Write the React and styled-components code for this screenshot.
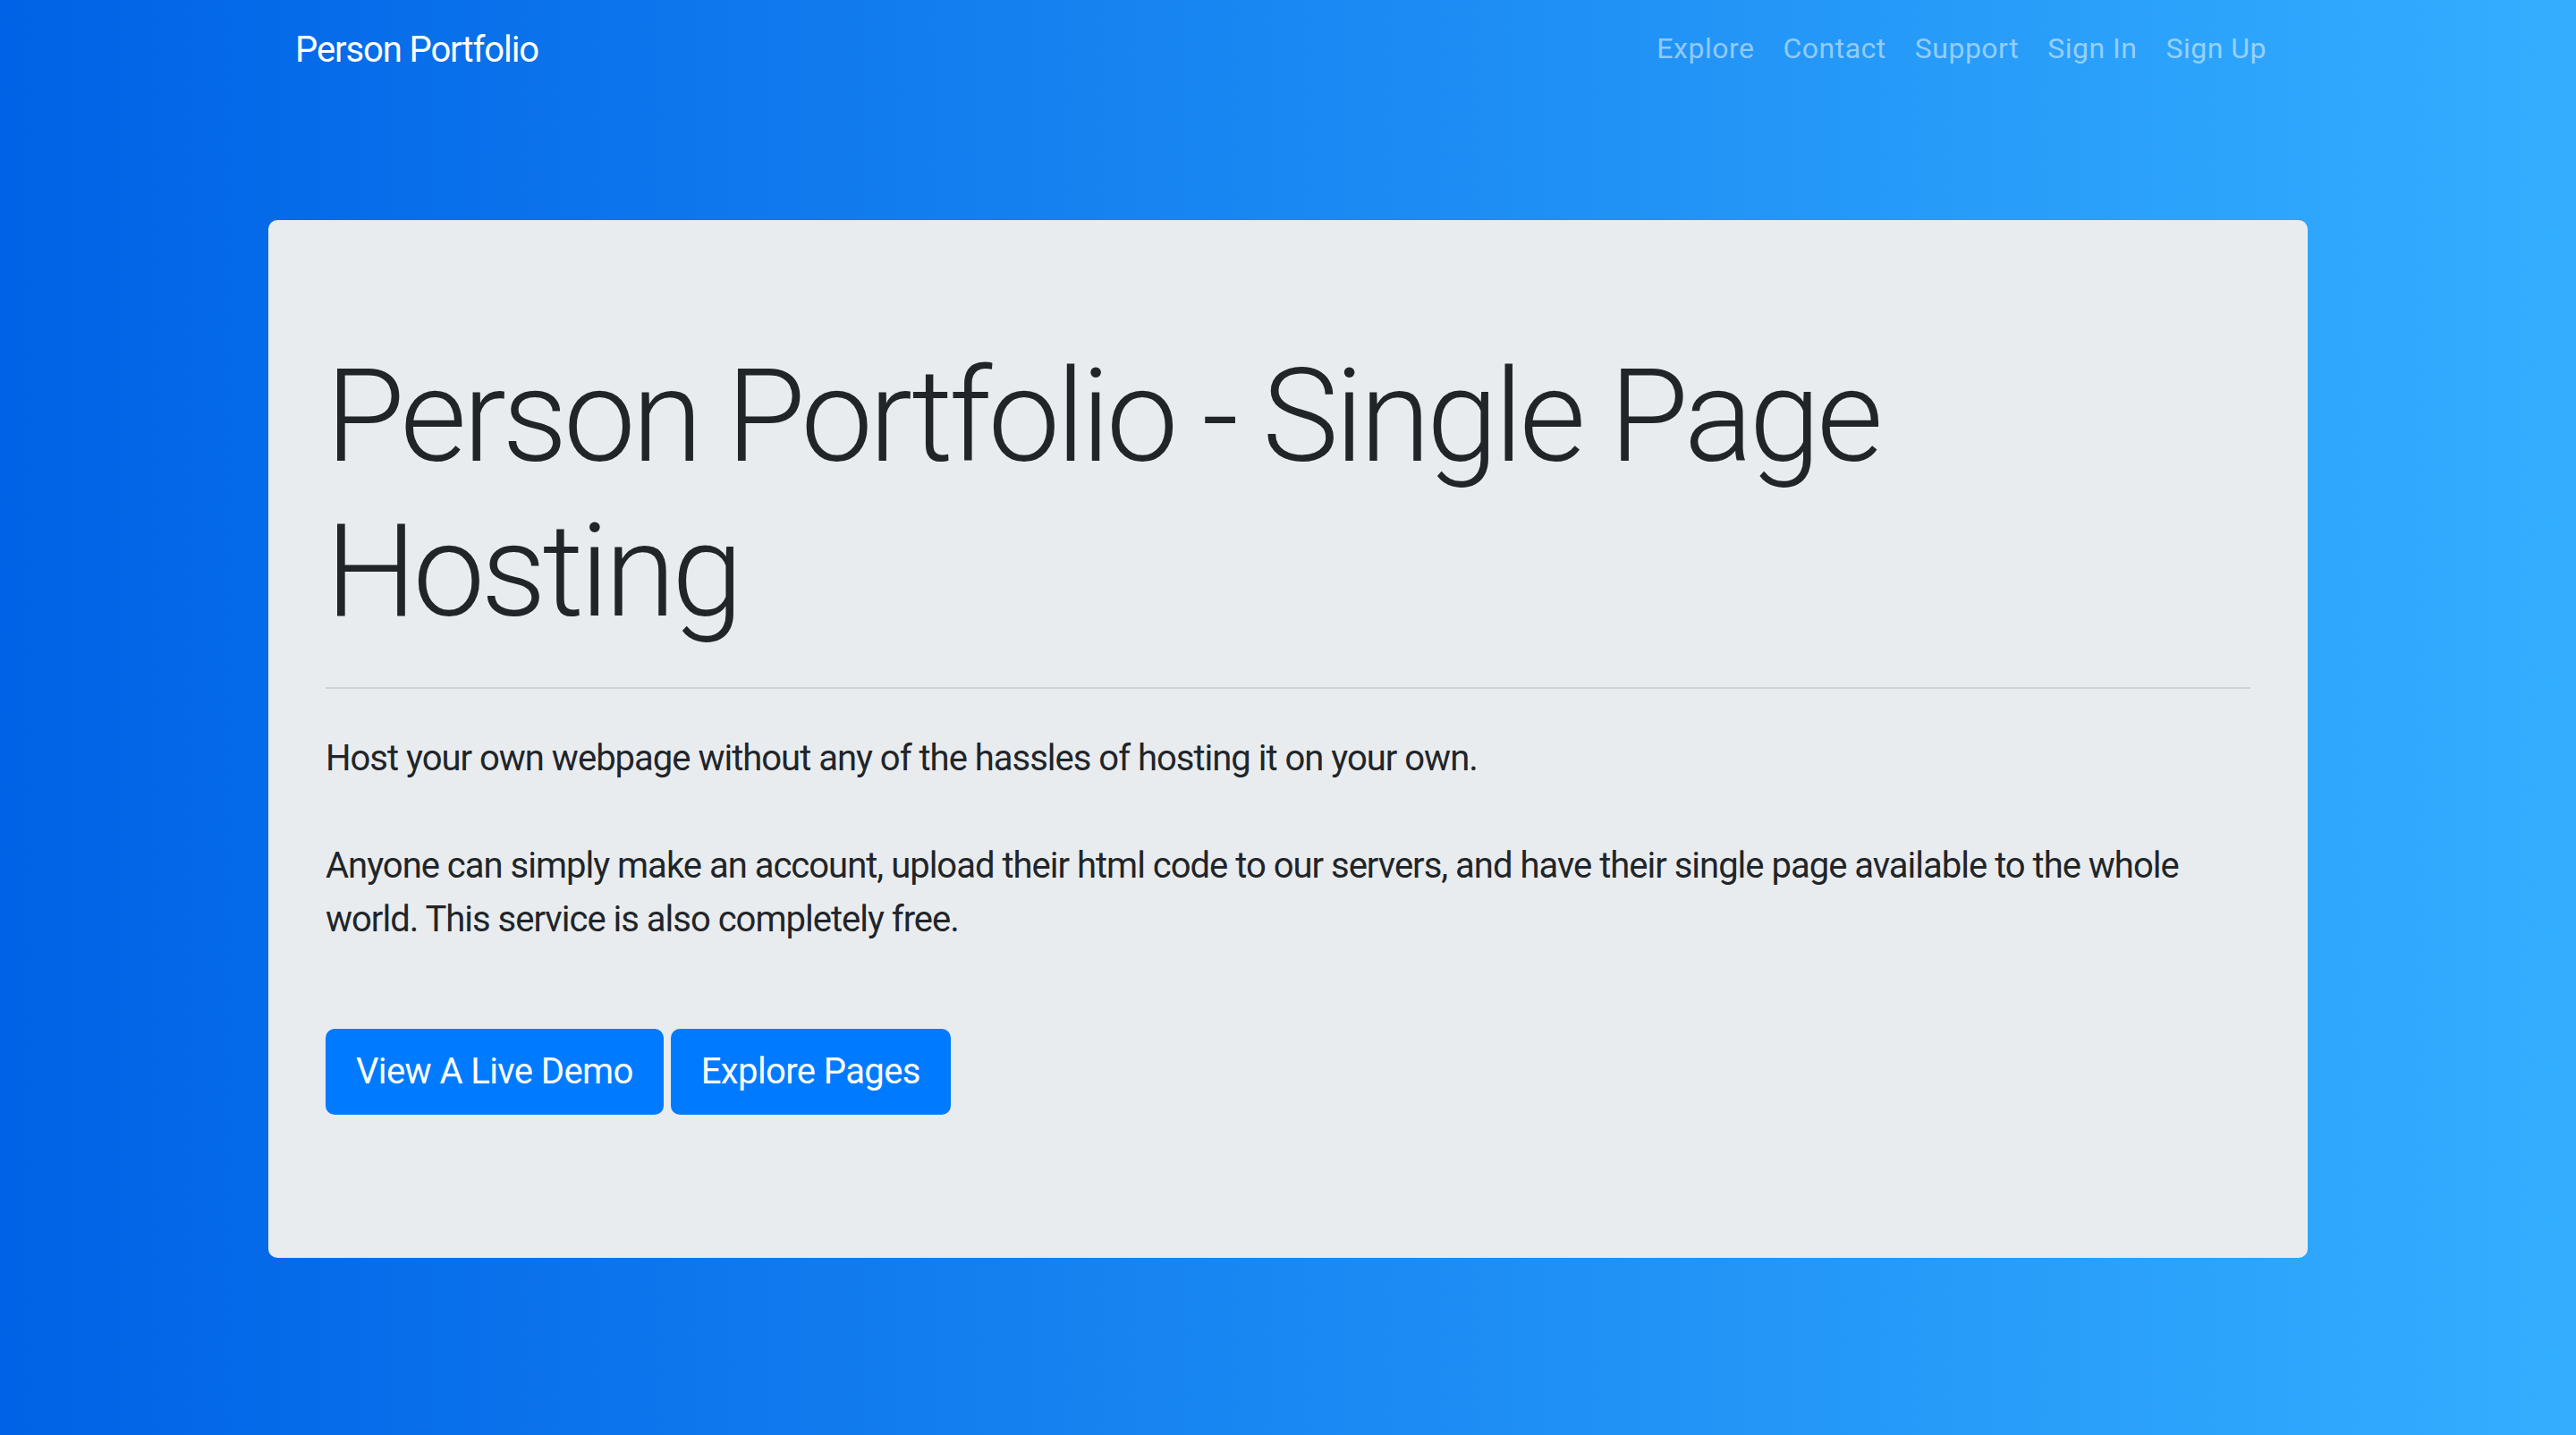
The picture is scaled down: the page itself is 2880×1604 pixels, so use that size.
import React from 'react'
import styled, { createGlobalStyle } from 'styled-components'

const GlobalStyle = createGlobalStyle`
  html, body {
    margin: 0;
    padding: 0;
  }
  body {
    font-family: Roboto, Inter, "Liberation Sans", sans-serif;
    color: #212529;
  }
  * {
    box-sizing: border-box;
  }
`

const Page = styled.div`
  min-height: 100vh;
  background: linear-gradient(to right, #0062e6, #33aeff);
  overflow: hidden;
`

const Navbar = styled.nav`
  padding: 16px 32px;
`

const NavInner = styled.div`
  width: 2280px;
  margin: 0 auto;
  padding: 0 30px;
  display: flex;
  align-items: center;
  justify-content: space-between;
`

const Brand = styled.a`
  font-size: 40px;
  line-height: 60px;
  padding: 10px 0;
  color: #fff;
  text-decoration: none;
  letter-spacing: -1.1px;
`

const NavLinks = styled.ul`
  display: flex;
  list-style: none;
  margin: 0;
  padding: 0;
`

const NavLink = styled.a`
  display: block;
  padding: 14px 16px 18px;
  font-size: 32px;
  line-height: 48px;
  color: rgba(255, 255, 255, 0.5);
  text-decoration: none;
  letter-spacing: 0.5px;
`

const Jumbotron = styled.section`
  width: 2280px;
  margin: 134px auto 0;
  padding: 128px 64px 160px;
  background: #e9ecef;
  border-radius: 10px;
`

const Title = styled.h1`
  margin: 0;
  padding-top: 6px;
  font-size: 144px;
  font-weight: 300;
  line-height: 1.2;
  letter-spacing: -4.4px;
  color: #212529;
`

const Divider = styled.hr`
  margin: 42px 0 48px;
  border: 0;
  border-top: 2px solid rgba(0, 0, 0, 0.1);
`

const Lead = styled.p`
  margin: 0 0 ${(p) => p.$gap || 0}px;
  font-size: 40px;
  line-height: 60px;
  font-weight: 400;
  letter-spacing: -1px;
`

const Actions = styled.div`
  display: flex;
  gap: 8px;
  margin-top: 92px;
`

const Button = styled.a`
  display: inline-block;
  padding: 16px 32px;
  font-size: 40px;
  line-height: 60px;
  color: #fff;
  background: #007bff;
  border: 2px solid #007bff;
  border-radius: 10px;
  text-decoration: none;
  letter-spacing: -0.6px;
`

const links = ['Explore', 'Contact', 'Support', 'Sign In', 'Sign Up']

export default function App() {
  return (
    <Page>
      <GlobalStyle />
      <Navbar>
        <NavInner>
          <Brand href="#">Person Portfolio</Brand>
          <NavLinks>
            {links.map((l) => (
              <li key={l}>
                <NavLink href="#">{l}</NavLink>
              </li>
            ))}
          </NavLinks>
        </NavInner>
      </Navbar>
      <Jumbotron>
        <Title>Person Portfolio - Single Page Hosting</Title>
        <Divider />
        <Lead $gap={60}>Host your own webpage without any of the hassles of hosting it on your own.</Lead>
        <Lead>
          Anyone can simply make an account, upload their html code to our servers, and have their single page
          available to the whole world. This service is also completely free.
        </Lead>
        <Actions>
          <Button href="#">View A Live Demo</Button>
          <Button href="#">Explore Pages</Button>
        </Actions>
      </Jumbotron>
    </Page>
  )
}
